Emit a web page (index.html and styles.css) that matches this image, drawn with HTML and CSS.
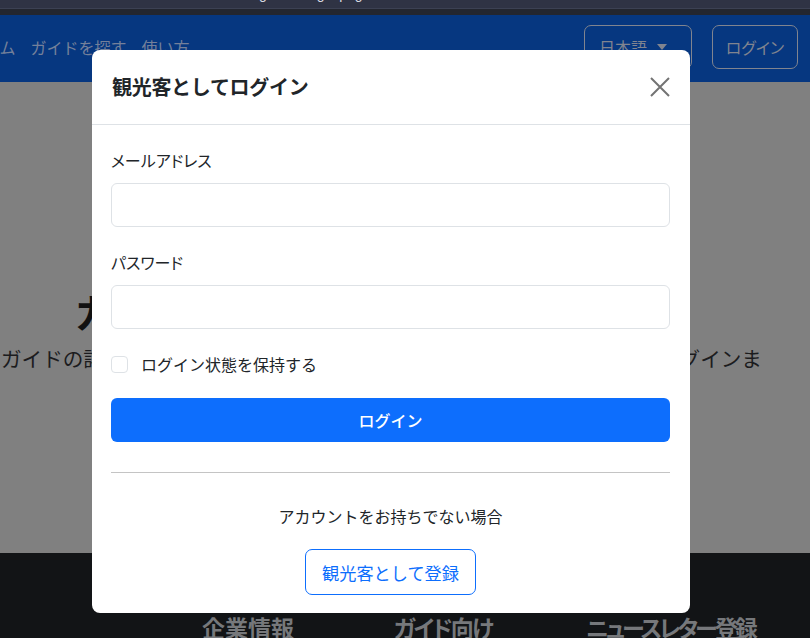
FILE: index.html
```html
<!DOCTYPE html>
<html lang="ja">
<head>
<meta charset="utf-8">
<title>観光客としてログイン</title>
<link rel="stylesheet" href="styles.css">
</head>
<body>
<div class="page">
  <div class="chrome"><span class="chrome-text">Tourist guide · login page</span></div>
  <nav class="navbar">
    <div class="nav-links">
      <a class="nav-link">ホーム</a>
      <a class="nav-link">ガイドを探す</a>
      <a class="nav-link">使い方</a>
    </div>
    <div class="nav-actions">
      <button class="nav-btn lang-btn">日本語<svg class="caret" width="10" height="6" viewBox="0 0 10 6"><path d="M0 0h10L5 6z" fill="currentColor"/></svg></button>
      <button class="nav-btn login-btn">ログイン</button>
    </div>
  </nav>
  <main class="hero">
    <h2 class="hero-title">ガイドの詳細プロフィール</h2>
    <p class="hero-text">ガイドの詳細なプロフィールやレビューを見るには、観光客として一度ログインま</p>
    <p class="hero-text centered">たは登録してください。</p>
  </main>
  <footer class="footer">
    <h3 class="footer-title">企業情報</h3>
    <h3 class="footer-title narrow">ガイド向け</h3>
    <h3 class="footer-title narrower">ニュースレター登録</h3>
  </footer>
</div>

<div class="modal">
  <div class="modal-header">
    <h5 class="modal-title">観光客としてログイン</h5>
    <button class="btn-close" aria-label="閉じる"><svg width="20" height="20" viewBox="0 0 20 20"><path d="M1 1L19 19M19 1L1 19" stroke="#737373" stroke-width="2" fill="none"/></svg></button>
  </div>
  <div class="modal-body">
    <label class="form-label">メールアドレス</label>
    <div class="form-control"></div>
    <label class="form-label second">パスワード</label>
    <div class="form-control"></div>
    <div class="check-row">
      <span class="check-box"></span>
      <span class="check-label">ログイン状態を保持する</span>
    </div>
    <button class="btn-primary">ログイン</button>
    <hr class="divider">
    <p class="no-account">アカウントをお持ちでない場合</p>
    <div class="register-wrap">
      <button class="btn-outline">観光客として登録</button>
    </div>
  </div>
</div>
</body>
</html>
```
FILE: styles.css
```css
* { box-sizing: border-box; }
html, body { margin: 0; padding: 0; }
body {
  width: 810px;
  height: 638px;
  overflow: hidden;
  font-family: "Noto Sans CJK JP", "Noto Sans", sans-serif;
  color: #212529;
  position: relative;
}
.page { width: 810px; height: 638px; overflow: hidden; }

.chrome {
  height: 15px;
  background: linear-gradient(to bottom, #2f3344 0, #2f3344 8px, #3c4153 8px, #3c4153 9px, #23262f 9px, #23262f 15px);
  overflow: hidden;
  padding-left: 214px;
}
.chrome-text {
  display: block;
  font-family: "Liberation Sans", sans-serif;
  font-size: 14px;
  line-height: 14px;
  margin-top: -13px;
  color: #d8dbe2;
}

.navbar {
  height: 67px;
  background: #063780;
  display: flex;
  align-items: center;
  justify-content: space-between;
  padding-right: 12px;
}
.nav-links {
  display: flex;
  gap: 15px;
  margin-left: -32px;
  margin-top: -4px;
}
.nav-link {
  font-size: 16px;
  line-height: 24px;
  color: #74809a;
}
.nav-actions { display: flex; gap: 20px; margin-top: -4px; }
.nav-btn {
  height: 44px;
  border: 1px solid #80848f;
  border-radius: 7px;
  background: transparent;
  color: #80848f;
  font-family: inherit;
  font-size: 16px;
  padding: 0 15px;
  display: flex;
  align-items: center;
}
.lang-btn { padding: 0 12px 0 14px; width: 108px; }
.login-btn { width: 86px; justify-content: center; padding: 0; font-feature-settings: "palt"; }
.caret { margin-left: 10px; }

.hero {
  height: 471px;
  background: #808080;
  padding-top: 205px;
  white-space: nowrap;
}
.hero-title {
  margin: 0;
  padding-left: 75px;
  font-size: 40px;
  line-height: 48px;
  font-weight: 700;
  color: #111111;
}
.hero-text {
  margin: 8px 0 0 1px;
  font-size: 20.6px;
  line-height: 30px;
  color: #1c1c1e;
}
.hero-text.centered { margin: 0; text-align: center; }

.footer {
  height: 85px;
  background: #121416;
  display: grid;
  grid-template-columns: repeat(3, 192px);
  padding: 58px 0 0 202px;
}
.footer-title {
  margin: 0;
  font-size: 23px;
  line-height: 32px;
  font-weight: 700;
  color: #76787b;
  white-space: nowrap;
  font-feature-settings: "palt";
}
.footer-title.narrow { letter-spacing: -2px; }
.footer-title.narrower { letter-spacing: -3px; }

.modal {
  position: absolute;
  left: 92px;
  top: 50px;
  width: 598px;
  background: #ffffff;
  border-radius: 8px;
}
.modal-header {
  display: flex;
  align-items: center;
  justify-content: space-between;
  padding: 22px 20px 22px 20px;
  border-bottom: 1px solid #dee2e6;
}
.modal-title {
  margin: 0;
  font-size: 20px;
  line-height: 30px;
  font-weight: 700;
  color: #212529;
  letter-spacing: -0.3px;
}
.btn-close {
  border: 0;
  background: transparent;
  padding: 0;
  width: 20px;
  height: 20px;
  display: block;
}
.btn-close svg { display: block; }

.modal-body {
  padding: 23px 20px 18px 19px;
  display: flex;
  flex-direction: column;
}
.form-label {
  font-size: 16px;
  line-height: 24px;
  font-feature-settings: "palt";
  color: #212529;
}
.form-label.second { margin-top: 23px; }
.form-control {
  margin-top: 11px;
  height: 44px;
  border: 1px solid #dee2e6;
  border-radius: 6px;
  background: #fff;
}
.check-row {
  margin-top: 23px;
  display: flex;
  align-items: center;
  height: 24px;
}
.check-box {
  width: 17px;
  height: 17px;
  border: 1px solid #dee2e6;
  border-radius: 4px;
  margin-right: 13px;
}
.check-label {
  font-size: 16px;
  line-height: 24px;
  color: #212529;
}
.btn-primary {
  margin-top: 22px;
  height: 44px;
  border: 0;
  border-radius: 6px;
  background: #0d6efd;
  color: #ffffff;
  font-family: inherit;
  font-size: 16px;
  font-weight: 500;
}
.divider {
  margin: 30px 0 0 0;
  border: 0;
  border-top: 1px solid #c4c4c4;
  height: 0;
}
.no-account {
  margin: 31px 0 0 0;
  text-align: center;
  font-size: 16px;
  line-height: 24px;
  color: #212529;
}
.register-wrap {
  margin-top: 21px;
  display: flex;
  justify-content: center;
}
.btn-outline {
  height: 46px;
  padding: 0 16px;
  border: 1px solid #0d6efd;
  border-radius: 7px;
  background: #fff;
  color: #0d6efd;
  font-family: inherit;
  font-size: 17.2px;
}
```
